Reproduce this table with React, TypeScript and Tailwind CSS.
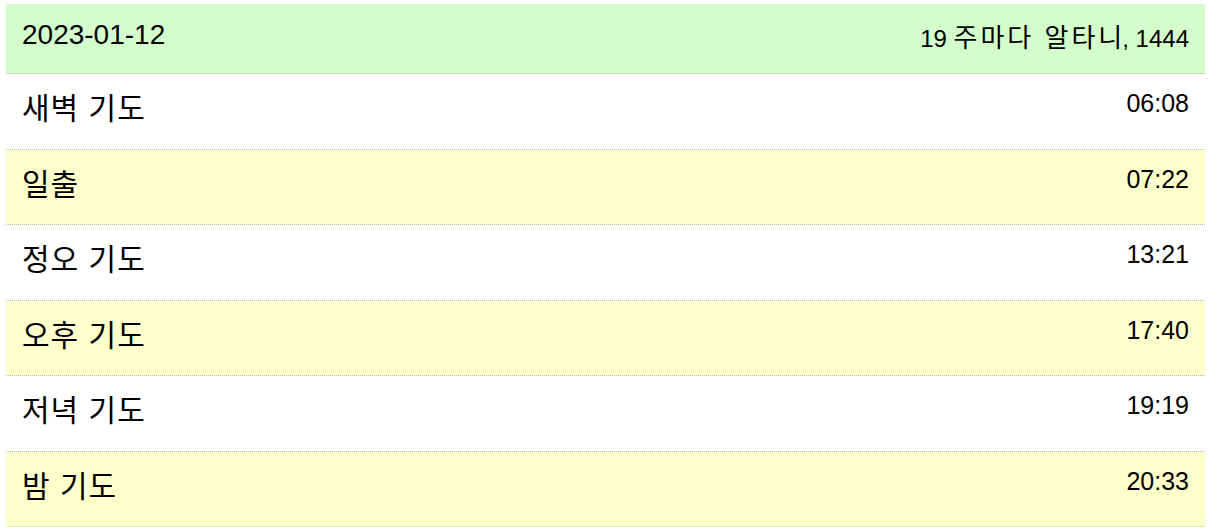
import React from "react";

const rows: { name: string; time: string; yellow: boolean }[] = [
  { name: "새벽 기도", time: "06:08", yellow: false },
  { name: "일출", time: "07:22", yellow: true },
  { name: "정오 기도", time: "13:21", yellow: false },
  { name: "오후 기도", time: "17:40", yellow: true },
  { name: "저녁 기도", time: "19:19", yellow: false },
  { name: "밤 기도", time: "20:33", yellow: true },
];

export default function App() {
  return (
    <div
      className="w-[1209px] h-[528px] bg-white pl-[6px] pr-[4px] pt-[4px] text-black"
      style={{ fontFamily: '"Liberation Sans", "Noto Sans CJK KR", sans-serif' }}
    >
      <div className="flex flex-col">
        <div className="flex justify-between items-start h-[70px] bg-[#d3fdcb] border-b border-dotted border-[#b8b8b8] px-4">
          <span className="text-[28px] leading-[32px] mt-[15px]">2023-01-12</span>
          <span className="text-[24px] leading-[28px] mt-[21px] whitespace-pre">
            19 <span className="text-[26px] leading-none tracking-[3px]">주마다 알타</span>
            <span className="text-[26px] leading-none">니</span>, 1444
          </span>
        </div>
        {rows.map((r, i) => (
          <div
            key={r.name}
            className={
              "flex justify-between items-start h-[75.5px] border-b border-dotted px-4 " +
              (r.yellow ? "bg-[#ffffcc] " : "bg-white ") +
              (i === rows.length - 1 ? "border-[#b8dcaa]" : "border-[#b8b8b8]")
            }
          >
            <span className="text-[30px] leading-[34px] mt-[18px] tracking-[1px]">{r.name}</span>
            <span className="text-[25px] leading-[28px] mt-[15px]">{r.time}</span>
          </div>
        ))}
      </div>
    </div>
  );
}
